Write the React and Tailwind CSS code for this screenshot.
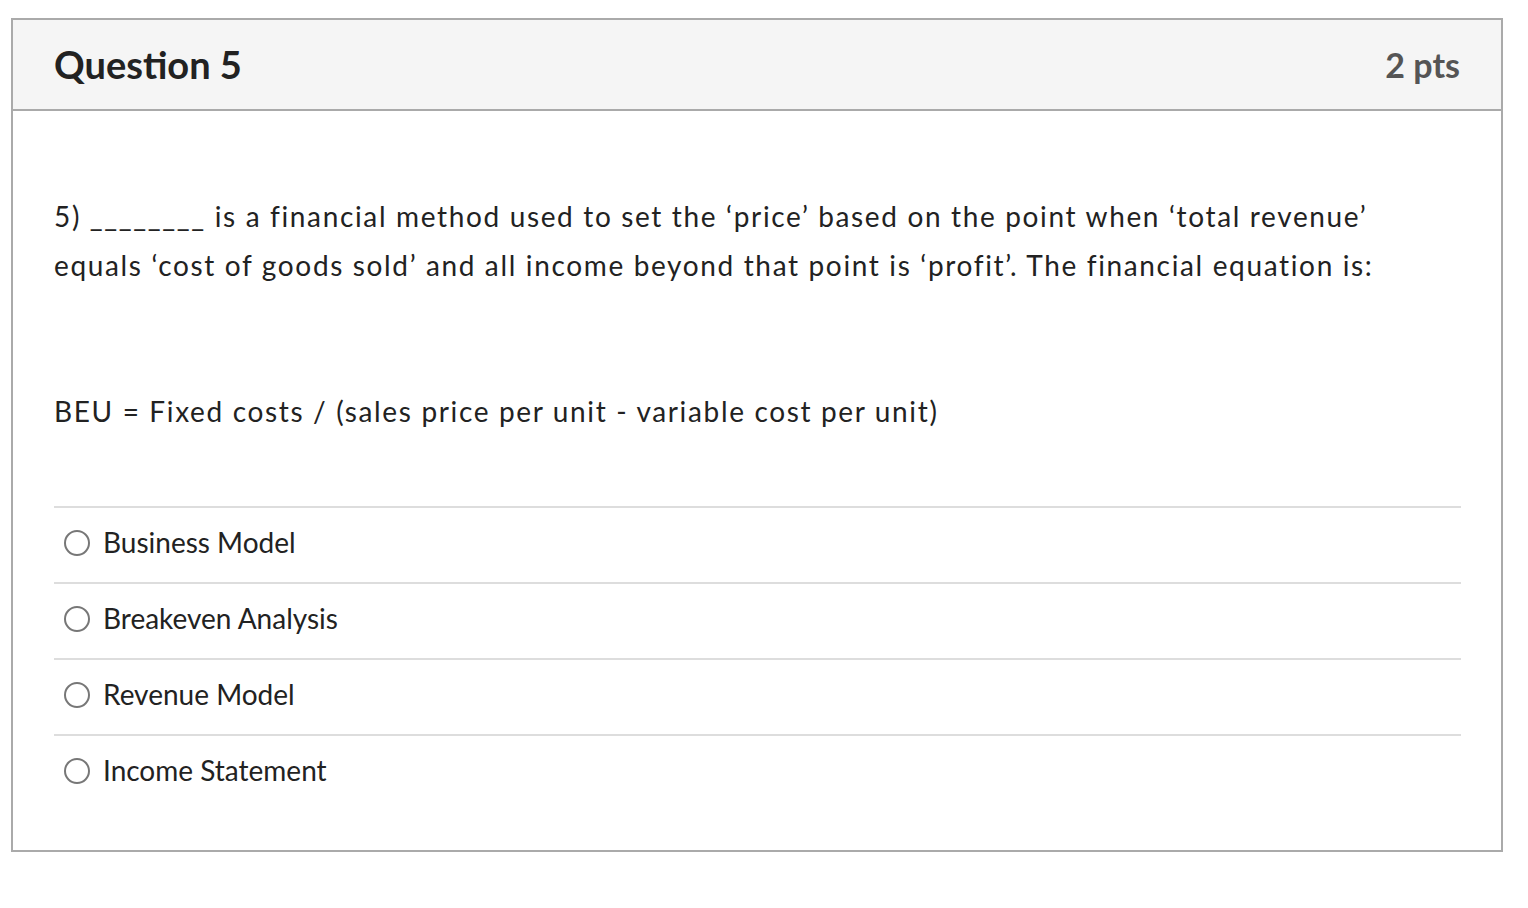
export default function App() {
  const answers = ["Business Model", "Breakeven Analysis", "Revenue Model", "Income Statement"];
  return (
    <div className="min-h-[908px] bg-white pt-[18px] pl-[11px]" style={{ fontFamily: "Lato, 'Open Sans', sans-serif" }}>
      <div className="w-[1492px] border-2 border-[#aaaaaa] bg-white">
        <div className="flex h-[91px] items-center justify-between border-b-2 border-[#aaaaaa] bg-[#f5f5f5] pl-[41px] pr-[41px]">
          <div className="text-[38px] font-bold text-[#222222]">Question 5</div>
          <div className="text-[34px] font-bold text-[#555555]">2 pts</div>
        </div>
        <div className="pl-[41px] pr-[40px] pt-[81px] pb-[40px] text-[28px] leading-[49px] text-[#222222]">
          <p className="max-w-[1380px] tracking-[1.65px]">
            5) ________ is a financial method used to set the ‘price’ based on the point when ‘total revenue’ equals ‘cost of goods sold’ and all income beyond that point is ‘profit’. The financial equation is:
          </p>
          <p className="mt-[97px] tracking-[1.65px]">BEU = Fixed costs / (sales price per unit - variable cost per unit)</p>
          <div className="mt-[70px]">
            {answers.map((a) => (
              <div key={a} className="flex items-center border-t-2 border-[#dddddd] pt-[10px] pb-[15px]">
                <span className="ml-[10px] mr-[13px] inline-block h-[26px] w-[26px] rounded-full border-2 border-[#777777] bg-white"></span>
                <span>{a}</span>
              </div>
            ))}
          </div>
        </div>
      </div>
    </div>
  );
}
